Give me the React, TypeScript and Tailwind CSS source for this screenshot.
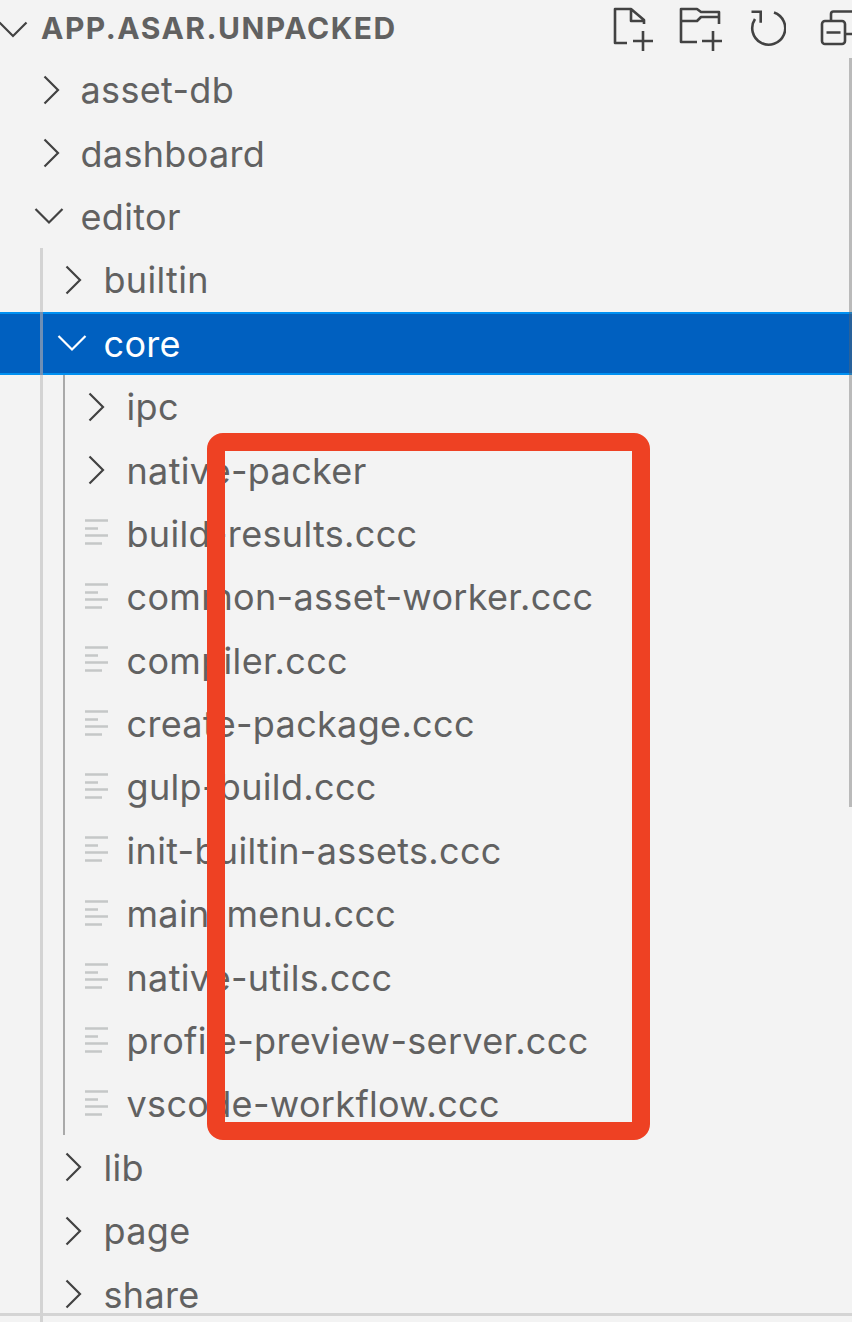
type Row = {
  name: string;
  depth: number;
  kind: 'open' | 'closed' | 'file';
  selected?: boolean;
};

const rows: Row[] = [
  { name: 'asset-db', depth: 0, kind: 'closed' },
  { name: 'dashboard', depth: 0, kind: 'closed' },
  { name: 'editor', depth: 0, kind: 'open' },
  { name: 'builtin', depth: 1, kind: 'closed' },
  { name: 'core', depth: 1, kind: 'open', selected: true },
  { name: 'ipc', depth: 2, kind: 'closed' },
  { name: 'native-packer', depth: 2, kind: 'closed' },
  { name: 'build-results.ccc', depth: 2, kind: 'file' },
  { name: 'common-asset-worker.ccc', depth: 2, kind: 'file' },
  { name: 'compiler.ccc', depth: 2, kind: 'file' },
  { name: 'create-package.ccc', depth: 2, kind: 'file' },
  { name: 'gulp-build.ccc', depth: 2, kind: 'file' },
  { name: 'init-builtin-assets.ccc', depth: 2, kind: 'file' },
  { name: 'main-menu.ccc', depth: 2, kind: 'file' },
  { name: 'native-utils.ccc', depth: 2, kind: 'file' },
  { name: 'profile-preview-server.ccc', depth: 2, kind: 'file' },
  { name: 'vscode-workflow.ccc', depth: 2, kind: 'file' },
  { name: 'lib', depth: 1, kind: 'closed' },
  { name: 'page', depth: 1, kind: 'closed' },
  { name: 'share', depth: 1, kind: 'closed' },
];

const Closed = () => (
  <svg width="17" height="30" viewBox="0 0 17 30" fill="none" stroke="currentColor" strokeWidth="2.2">
    <path d="M1.500 1.500 15 15 1.500 28.500" />
  </svg>
);

const Open = () => (
  <svg width="30" height="17" viewBox="0 0 30 17" fill="none" stroke="currentColor" strokeWidth="2.2">
    <path d="M1.500 1.500 15 15 28.500 1.500" />
  </svg>
);

const FileLines = () => (
  <svg width="26" height="28" viewBox="0 0 26 28" fill="none" stroke="#c5c7c7" strokeWidth="2.4">
    <path d="M2 1.500h23M2 9.500h13M2 16.500h23M2 24.500h17" />
  </svg>
);

const NewFile = () => (
  <svg className="mr-[24px] shrink-0" width="42" height="46" viewBox="0 0 42 46" fill="none" stroke="#424242" strokeWidth="2.600">
    <path d="M14 37H2V3h16l13 11v4M18 3v12h13" strokeLinejoin="round" />
    <path d="M20 35h20M30 25v20" />
  </svg>
);

const NewFolder = () => (
  <svg className="mr-[27px] shrink-0" width="44" height="46" viewBox="0 0 44 46" fill="none" stroke="#424242" strokeWidth="2.600">
    <path d="M18 36H2V3h16l4 3h18v12" strokeLinejoin="round" />
    <path d="M2 15h16l4-4h18" strokeLinejoin="round" />
    <path d="M23 35h20M34 25v20" />
  </svg>
);

const Refresh = () => (
  <svg className="mr-[34px] shrink-0" width="36" height="46" viewBox="0 0 36 46" fill="none" stroke="#424242" strokeWidth="2.600">
    <path d="M24 6.500A16.500 16.500 0 1 1 5 13" />
    <path d="M1.500 5.700h9.200v11" />
  </svg>
);

const Collapse = () => (
  <svg className="shrink-0" width="32" height="46" viewBox="0 0 32 46" fill="none" stroke="#424242" strokeWidth="2.600">
    <rect x="2" y="15" width="23" height="23" rx="3" />
    <path d="M6.500 26.500h14M11 15V8q0-2.500 2.500-2.500H32M25 28h7" />
  </svg>
);

const closedLeft = ['left-[43px]', 'left-[65px]', 'left-[88px]'];
const openLeft = ['left-[34px]', 'left-[57px]', 'left-[80px]'];
const textLeft = ['pl-[80.5px]', 'pl-[103.5px]', 'pl-[126.5px]'];

const TreeRow = ({ row }: { row: Row }) => {
  const isLastInCore = row.name === 'vscode-workflow.ccc';

  return (
    <div
      className={`relative flex h-[63.4px] items-center ${textLeft[row.depth]} ${
        row.selected ? 'border-y-2 border-[#0090f1] bg-[#0060c0]' : ''
      }`}
    >
      {row.depth >= 1 && (
        <span
          className={`absolute left-[40px] w-[3px] ${
            row.selected ? '-top-[2px] -bottom-[2px] bg-[#6f8fb5]' : 'top-0 bottom-0 bg-[#d3d3d3]'
          }`}
        />
      )}
      {row.depth >= 2 && (
        <span className={`absolute left-[63px] top-0 w-[2px] bg-[#a9a9a9] ${isLastInCore ? 'bottom-[1px]' : 'bottom-0'}`} />
      )}
      {row.kind === 'file' && (
        <span className="absolute left-[83px] top-1/2 flex -translate-y-1/2">
          <FileLines />
        </span>
      )}
      {row.kind === 'closed' && (
        <span className={`absolute top-1/2 flex -translate-y-1/2 text-[#424242] ${closedLeft[row.depth]}`}>
          <Closed />
        </span>
      )}
      {row.kind === 'open' && (
        <span className={`absolute top-1/2 flex -translate-y-1/2 ${row.selected ? 'text-white' : 'text-[#424242]'} ${openLeft[row.depth]}`}>
          <Open />
        </span>
      )}
      <span className={`whitespace-nowrap pt-[1px] text-[36px] leading-none tracking-[0.33px] ${row.selected ? 'text-white' : 'text-[#616161]'}`}>
        {row.name}
      </span>
    </div>
  );
};

export default function App() {
  return (
    <div className="relative h-[1322px] w-[852px] overflow-hidden bg-[#f3f3f3] font-['Inter','Liberation_Sans',sans-serif]">
      {/* header */}
      <div className="relative flex h-[58px] items-center pl-[41px]">
        <span className="absolute left-[-2px] top-[21px] flex text-[#424242]">
          <Open />
        </span>
        <span className="w-[572px] shrink-0 pb-[3px] text-[30px] font-bold leading-none tracking-[1.5px] text-[#616161]">
          APP.ASAR.UNPACKED
        </span>
        <NewFile />
        <NewFolder />
        <Refresh />
        <Collapse />
      </div>

      {/* tree */}
      <div className="h-[1255px]">
        {rows.map((row) => (
          <TreeRow key={row.name} row={row} />
        ))}
      </div>

      <div className="h-[3px] bg-[#d4d4d4]" />

      {/* scrollbar */}
      <div className="absolute right-0 top-[58px] h-[749px] w-[3px] bg-[#646464]/40" />

      {/* annotation */}
      <div className="absolute left-[207px] top-[433px] h-[707px] w-[443px] rounded-[16px] border-[18px] border-[#ee4123]" />
    </div>
  );
}
